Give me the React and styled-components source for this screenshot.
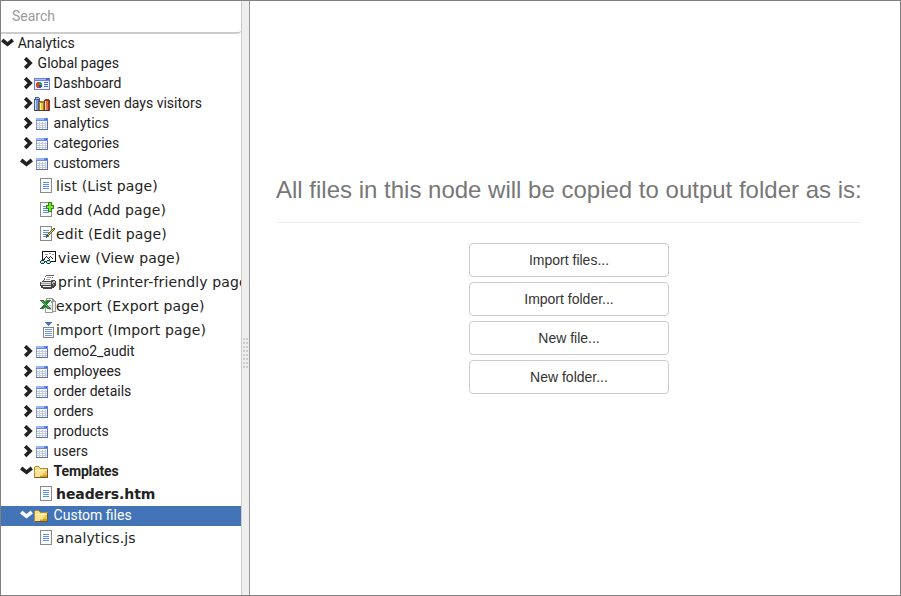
import React from 'react';
import styled, { createGlobalStyle } from 'styled-components';

const nodes = [
    { label: 'Analytics', open: true, level: 0 },
    { label: 'Global pages', level: 1 },
    { label: 'Dashboard', level: 1, icon: 'dashboard' },
    { label: 'Last seven days visitors', level: 1, icon: 'chart' },
    { label: 'analytics', level: 1, icon: 'table' },
    { label: 'categories', level: 1, icon: 'table' },
    {
        label: 'customers', level: 1, icon: 'table', open: true,
        pages: [
            { label: 'list (List page)', icon: 'page' },
            { label: 'add (Add page)', icon: 'add' },
            { label: 'edit (Edit page)', icon: 'edit' },
            { label: 'view (View page)', icon: 'view', gap: 2 },
            { label: 'print (Printer-friendly page)', icon: 'print', gap: 2 },
            { label: 'export (Export page)', icon: 'export' },
            { label: 'import (Import page)', icon: 'import' },
        ],
    },
    { label: 'demo2_audit', level: 1, icon: 'table' },
    { label: 'employees', level: 1, icon: 'table' },
    { label: 'order details', level: 1, icon: 'table' },
    { label: 'orders', level: 1, icon: 'table' },
    { label: 'products', level: 1, icon: 'table' },
    { label: 'users', level: 1, icon: 'table' },
    {
        label: 'Templates', level: 1, icon: 'folder', open: true, bold: true,
        pages: [{ label: 'headers.htm', icon: 'page', bold: true }],
    },
    {
        label: 'Custom files', level: 1, icon: 'folder', open: true, selected: true,
        pages: [{ label: 'analytics.js', icon: 'page' }],
    },
];

const actions = ['Import files...', 'Import folder...', 'New file...', 'New folder...'];

const Sheet = () => (
    <React.Fragment>
        <path d="M0 0h12v15H0z" fill="#8a8a8a" />
        <path d="M1 1h10v13H1z" fill="#fbfcfe" />
        <path d="M3 4h6v1H3zM3 6h6v1H3zM3 8h6v1H3zM3 10h6v1H3z" fill="#5f8fe0" />
    </React.Fragment>
);

const drawings = {
    table: (
        <React.Fragment>
            <path d="M2 2h12v12H2z" fill="#8296d6" />
            <path d="M2 2h12v3H2z" fill="#6788ec" />
            <path d="M2 2h8v2H2z" fill="#9bb4fa" />
            <path d="M12 3h1v1h-1z" fill="#2f4fc4" />
            <path d="M3 5h10v8H3z" fill="#fff" />
            <path d="M3 7h10v1H3zM3 9h10v1H3zM3 11h10v1H3zM5 6h1v7H5zM8 6h1v7H8zM11 6h1v7h-1z" fill="#c3cad8" />
            <path d="M13 5h1v9h-1zM2 13h12v1H2z" fill="#5a6db5" />
        </React.Fragment>
    ),
    dashboard: (
        <React.Fragment>
            <path d="M0 2h16v12H0z" fill="#6d82d4" />
            <path d="M1 3h11v1H1z" fill="#a9bdfb" />
            <path d="M12 2h3v2h-3z" fill="#4265dc" />
            <path d="M1 5h14v8H1z" fill="#f0f5ff" />
            <path d="M2 7h1V6h2v3h1v2H5v1H3v-1H2z" fill="#e8401c" />
            <path d="M5 6h2v1h1v2H5z" fill="#2aa84b" />
            <path d="M5 9h3v2H7v1H5z" fill="#2551c7" />
            <path d="M10 6h4v1h-4zM10 8h4v1h-4zM10 10h4v1h-4z" fill="#4564bd" />
        </React.Fragment>
    ),
    chart: (
        <React.Fragment>
            <path d="M0 3h1V1h4v1h1v13H0z" fill="#44598f" />
            <path d="M1 4h3v10H1z" fill="#7398e2" />
            <path d="M1 4h1v10H1z" fill="#d0dcff" />
            <path d="M2 2h3v1H2z" fill="#b9cbf2" />
            <path d="M5 6h1V5h4v10H5z" fill="#a77d12" />
            <path d="M6 7h3v7H6z" fill="#f2c62c" />
            <path d="M6 7h1v7H6z" fill="#fff6b4" />
            <path d="M10 4h1V3h4v1h1v11h-6z" fill="#8a3b20" />
            <path d="M11 5h3v9h-3z" fill="#e07244" />
            <path d="M11 5h1v9h-1z" fill="#ffd5bd" />
            <path d="M1 14h14v1H1z" fill="#4c3d38" />
        </React.Fragment>
    ),
    folder: (
        <React.Fragment>
            <path d="M0 3h1V2h4v1h1v1h8v10H0z" fill="#b28a38" />
            <path d="M1 3h4v1h1v1h7v1H1z" fill="#f6df8b" />
            <path d="M1 6h12v7H1z" fill="#edc552" />
            <path d="M1 6h12v1H1z" fill="#fff3b5" />
            <path d="M1 7h10v2H9v2H6v2H1z" fill="#fae391" />
            <path d="M9 11h4v2H6v-1h3z" fill="#d09d2c" />
            <path d="M13 5h1v9H1v-1h12z" fill="#735b28" />
        </React.Fragment>
    ),
    page: <Sheet />,
    add: (
        <React.Fragment>
            <Sheet />
            <path d="M8 0h4v3h2v4h-2v3H8V7H6V3h2z" fill="#258c17" />
            <path d="M9 1h2v3h2v2h-2v3H9V6H7V4h2z" fill="#83dd32" />
        </React.Fragment>
    ),
    edit: (
        <React.Fragment>
            <Sheet />
            <path d="M6 12V9h1V8h1V7h1V6h1V5h1V4h1V3h1V2h2v2h-1v1h-1v1h-1v1h-1v1h-1v1H9v1H8v1H7v1z" fill="#5c572a" />
            <path d="M8 9V8h1V7h1V6h1V5h1V4h1V3h1v1h-1v1h-1v1h-1v1h-1v1H9v1z" fill="#f4e249" />
        </React.Fragment>
    ),
    view: (
        <React.Fragment>
            <path d="M2 1h14v11H2z" fill="#15151d" />
            <path d="M3 2h12v9H3z" fill="#fff" />
            <path d="M5 4h3v1H5zM9 3h2v1H9zM12 4h2v1h-2z" fill="#8f96ad" />
            <path d="M4 8h1V7h1V6h1v1h1v1h1V7h1V6h1v1h1v1h1v1h-1V8h-1V7h-1v1H9v1H8V8H7V7H6v1H5v2H4zM3 9h1v2H3zM9 9h1v2H9z" fill="#222" />
            <path d="M1 10h3v1h3v-1h3v1h1v2h-1v1H7v-1H6v-1H5v1H4v1H1v-1H0v-2h1z" fill="#173b3f" />
            <path d="M1 11h3v2H1zM7 11h3v2H7z" fill="#a6f0ed" />
        </React.Fragment>
    ),
    print: (
        <React.Fragment>
            <path d="M6 1h8v1h-1v2h-1v3H3V6h1V4h1V2h1z" fill="#666" />
            <path d="M6 2h7l-2 5H4z" fill="#fff" />
            <path d="M7 3h4v1H7zM6 5h4v1H6z" fill="#aaa" />
            <path d="M0 8h2V7h10V6h3v1h1v5h-1v1h-1v1h-2v1H3v-1H1v-2H0z" fill="#454545" />
            <path d="M1 8h10v1H1zM1 10h10v1H1z" fill="#e2e2e2" />
            <path d="M1 9h10v1H1z" fill="#9a9a9a" />
            <path d="M3 12h8v1H3z" fill="#f1f1f1" />
            <path d="M12 8h1V7h2v1h-1v1h-1v1h-1zM13 10h1v1h-1zM14 8h1v1h-1z" fill="#bbb" />
        </React.Fragment>
    ),
    export: (
        <React.Fragment>
            <path d="M6 0h7v1h1v1h1v1h1v11H6z" fill="#999" />
            <path d="M7 1h5v3h3v9H7z" fill="#f2f2f2" />
            <path d="M5 2h6v1h1v1h1v11H5z" fill="#999" />
            <path d="M6 3h5v2h1v9H6z" fill="#fff" />
            <path d="M9 7h3v1H9zM9 9h3v1H9zM9 11h3v1H9z" fill="#ccc" />
            <path d="M0 2h4v1h1v1h1V3h1V2h4v1h-1v1H9v1H8v1H7v1h1v1h1v1h1v1h1v1H7v-1H6V9H5v1H4v1H0v-1h1V9h1V8h1V7h1V6H3V5H2V4H1V3H0z" fill="#227e2c" />
            <path d="M2 3h1v1h1v1h1v1h1v1h1v1h1v1h1v1H8V9H7V8H6V7H5V6H4V5H3V4H2z" fill="#68b660" />
        </React.Fragment>
    ),
    import: (
        <React.Fragment>
            <path d="M3 5h11v11H3z" fill="#858585" />
            <path d="M4 6h9v9H4z" fill="#fff" />
            <path d="M5 7h7v1H5zM5 9h7v1H5zM5 11h7v1H5zM5 13h7v1H5z" fill="#6c98dc" />
            <path d="M5 0h7v1h-1v1h-1v1H9v1H8V3H7V2H6V1H5z" fill="#4870c5" />
        </React.Fragment>
    ),
};

const Icon = ({ name }) => (
    <Glyph viewBox="0 0 16 16" shapeRendering="crispEdges">{drawings[name]}</Glyph>
);

const Arrow = ({ open }) => (
    <Chevron viewBox="0 0 14 14">
        <path
            d={open ? 'M1.2 3l5.3 4.3L11.8 3' : 'M5.2 1.2l4.9 4.9-4.9 4.9'}
            fill="none"
            stroke="currentColor"
            strokeWidth="3.6"
        />
    </Chevron>
);

const TreeNode = ({ node }) => (
    <React.Fragment>
        <NodeRow $level={node.level} $bold={node.bold} $selected={node.selected}>
            <Arrow open={node.open} />
            {node.icon && <Icon name={node.icon} />}
            <NodeLabel $root={!node.level}>{node.label}</NodeLabel>
        </NodeRow>
        {node.pages && node.pages.map((page) => (
            <PageRow key={page.label} $bold={page.bold}>
                <Icon name={page.icon} />
                <PageLabel $gap={page.gap}>{page.label}</PageLabel>
            </PageRow>
        ))}
    </React.Fragment>
);

const App = () => (
    <Window>
        <GlobalStyle />
        <Sidebar>
            <Search placeholder="Search" />
            {nodes.map((node) => <TreeNode key={node.label} node={node} />)}
        </Sidebar>
        <Splitter>
            <Grip>
                {Array.from({ length: 16 }, (_, i) => <Dot key={i} />)}
            </Grip>
        </Splitter>
        <Content>
            <Title>All files in this node will be copied to output folder as is:</Title>
            <Actions>
                {actions.map((label) => <Button key={label}>{label}</Button>)}
            </Actions>
        </Content>
    </Window>
);

const GlobalStyle = createGlobalStyle`
    * {
        box-sizing: border-box;
    }
    body {
        margin: 0;
        background: #fff;
    }
`;

const Window = styled.div`
    display: flex;
    width: 901px;
    height: 596px;
    border: 1px solid #808080;
    overflow: hidden;
    background: #fff;
`;

const Sidebar = styled.div`
    width: 240px;
    flex: none;
    overflow: hidden;
    color: #222;
`;

const Search = styled.input`
    display: block;
    width: 240px;
    height: 33px;
    padding: 0 11px 2px;
    border: 0 solid #ccc;
    border-width: 0 0 2px;
    border-radius: 0 0 4px 0;
    outline: none;
    font: 14px Roboto, sans-serif;

    &::placeholder {
        color: #999;
    }
`;

const NodeRow = styled.div`
    display: flex;
    align-items: center;
    height: 20px;
    padding-left: ${(props) => (props.$level ? 19 : 0)}px;
    font: ${(props) => (props.$bold ? 'bold' : 'normal')} 14px/18px Roboto, sans-serif;
    letter-spacing: ${(props) => (props.$bold ? '-0.15px' : '0')};
    white-space: nowrap;
    color: ${(props) => (props.$selected ? '#fff' : '#222')};
    background: ${(props) => (props.$selected ? '#4374b7' : 'transparent')};
`;

const NodeLabel = styled.span`
    padding: 0 0 2px ${(props) => (props.$root ? 2.7 : 3.6)}px;
`;

const PageRow = styled.div`
    display: flex;
    align-items: center;
    height: 24px;
    padding-left: 39px;
    font: ${(props) => (props.$bold ? 'bold' : 'normal')} 14px/20px "DejaVu Sans", sans-serif;
    letter-spacing: ${(props) => (props.$bold ? '-0.08px' : '0.13px')};
    white-space: nowrap;
`;

const PageLabel = styled.span`
    padding-left: ${(props) => props.$gap || 0}px;
`;

const Glyph = styled.svg`
    width: 16px;
    height: 16px;
    flex: none;
`;

const Chevron = styled.svg`
    width: 14px;
    height: 14px;
    flex: none;
`;

const Splitter = styled.div`
    display: flex;
    align-items: center;
    justify-content: center;
    width: 9px;
    flex: none;
    padding-top: 109px;
    border-left: 1px solid #ccc;
    border-right: 1px solid #999;
    background: #eee;
`;

const Grip = styled.div`
    display: grid;
    grid-template-columns: 2px 2px;
    gap: 2px 1px;
`;

const Dot = styled.span`
    width: 2px;
    height: 2px;
    background: #ccc;
`;

const Content = styled.div`
    flex: 1;
    padding: 173px 38px 0 26px;
`;

const Title = styled.h3`
    height: 49px;
    margin: 0 0 20px;
    border-bottom: 1px solid #eee;
    font: 24px/32px "Liberation Sans", sans-serif;
    white-space: nowrap;
    color: #777;
`;

const Actions = styled.div`
    display: flex;
    flex-direction: column;
    align-items: center;
    gap: 5px;
`;

const Button = styled.button`
    width: 200px;
    height: 34px;
    padding: 0;
    border: 1px solid #ccc;
    border-radius: 4px;
    background: #fff;
    font: 14px "Liberation Sans", sans-serif;
    color: #333;
`;

export default App;
